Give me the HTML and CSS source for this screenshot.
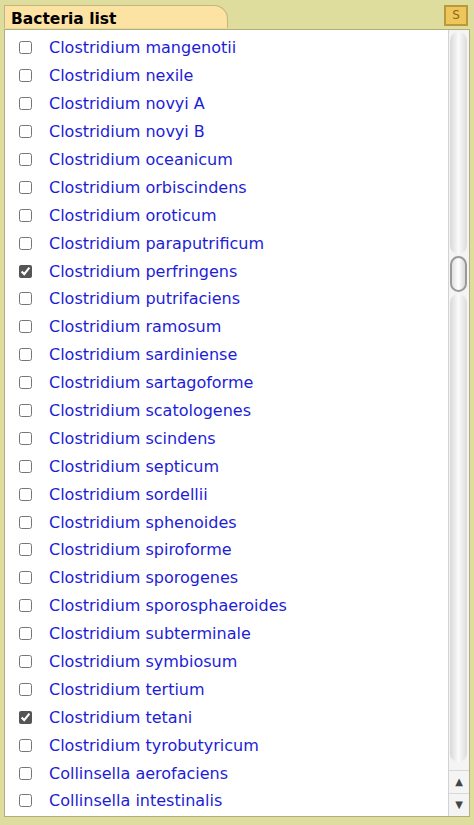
FILE: index.html
```html
<!DOCTYPE html>
<html lang="en">
<head>
    <meta charset="UTF-8">
    <meta name="viewport" content="width=device-width, initial-scale=1.0">
    <title>Bacteria list</title>
    <link rel="stylesheet" href="styles.css">
</head>
<body>

<div class="marco">
    <div class="cabecera">
        <div class="pestana">Bacteria list</div>
        <div class="boton-s">S</div>
    </div>

    <div class="caja">
        <ul class="lista">
            <li><input type="checkbox"><a href="#">Clostridium mangenotii</a></li>
            <li><input type="checkbox"><a href="#">Clostridium nexile</a></li>
            <li><input type="checkbox"><a href="#">Clostridium novyi A</a></li>
            <li><input type="checkbox"><a href="#">Clostridium novyi B</a></li>
            <li><input type="checkbox"><a href="#">Clostridium oceanicum</a></li>
            <li><input type="checkbox"><a href="#">Clostridium orbiscindens</a></li>
            <li><input type="checkbox"><a href="#">Clostridium oroticum</a></li>
            <li><input type="checkbox"><a href="#">Clostridium paraputrificum</a></li>
            <li><input type="checkbox" checked><a href="#">Clostridium perfringens</a></li>
            <li><input type="checkbox"><a href="#">Clostridium putrifaciens</a></li>
            <li><input type="checkbox"><a href="#">Clostridium ramosum</a></li>
            <li><input type="checkbox"><a href="#">Clostridium sardiniense</a></li>
            <li><input type="checkbox"><a href="#">Clostridium sartagoforme</a></li>
            <li><input type="checkbox"><a href="#">Clostridium scatologenes</a></li>
            <li><input type="checkbox"><a href="#">Clostridium scindens</a></li>
            <li><input type="checkbox"><a href="#">Clostridium septicum</a></li>
            <li><input type="checkbox"><a href="#">Clostridium sordellii</a></li>
            <li><input type="checkbox"><a href="#">Clostridium sphenoides</a></li>
            <li><input type="checkbox"><a href="#">Clostridium spiroforme</a></li>
            <li><input type="checkbox"><a href="#">Clostridium sporogenes</a></li>
            <li><input type="checkbox"><a href="#">Clostridium sporosphaeroides</a></li>
            <li><input type="checkbox"><a href="#">Clostridium subterminale</a></li>
            <li><input type="checkbox"><a href="#">Clostridium symbiosum</a></li>
            <li><input type="checkbox"><a href="#">Clostridium tertium</a></li>
            <li><input type="checkbox" checked><a href="#">Clostridium tetani</a></li>
            <li><input type="checkbox"><a href="#">Clostridium tyrobutyricum</a></li>
            <li><input type="checkbox"><a href="#">Collinsella aerofaciens</a></li>
            <li><input type="checkbox"><a href="#">Collinsella intestinalis</a></li>
        </ul>

        <div class="barra">
            <div class="pista">
                <div class="relleno-arriba"></div>
                <div class="pulgar"></div>
                <div class="relleno-abajo"></div>
            </div>
            <div class="flecha">&#9650;</div>
            <div class="flecha">&#9660;</div>
        </div>
    </div>
</div>

</body>
</html>
```

FILE: styles.css
```css
body {
    margin: 0;
    background-color: #dedd9d;
    font-family: "DejaVu Sans", Verdana, sans-serif;
}
.marco {
    width: 474px;
    height: 825px;
    padding: 5px 4px 0 4px;
    box-sizing: border-box;
}
.cabecera {
    display: flex;
    justify-content: space-between;
    align-items: flex-start;
    height: 24px;
}
.pestana {
    width: 224px;
    height: 23px;
    box-sizing: border-box;
    padding: 4px 0 0 6px;
    background-color: #fde3a3;
    border: 1px solid #c2b67a;
    border-bottom: none;
    border-top-right-radius: 14px;
    font-size: 15.5px;
    font-weight: bold;
    line-height: 19px;
    color: #000;
}
.boton-s {
    width: 24px;
    height: 21px;
    box-sizing: border-box;
    margin-right: 2px;
    background-color: #efc65c;
    border: 2px solid #b89a3c;
    color: #8a6a10;
    font-size: 12px;
    text-align: center;
    line-height: 17px;
}
.caja {
    display: flex;
    height: 786px;
    background-color: white;
    border: 1px solid #b3ad7c;
    overflow: hidden;
}
.lista {
    flex: 1;
    list-style: none;
    margin: 4px 0 0 0;
    padding: 0;
}
.lista li {
    display: flex;
    align-items: center;
    height: 27.9px;
    white-space: nowrap;
}
.lista input {
    width: 13px;
    height: 13px;
    margin: 0 17px 0 14px;
    accent-color: #555;
}
.lista a {
    color: #1d1dd6;
    text-decoration: none;
    font-size: 16px;
}
.barra {
    width: 20px;
    display: flex;
    flex-direction: column;
    border-left: 1px solid #d2d2d2;
    background-color: #f4f4f4;
}
.pista {
    flex: 1;
    display: flex;
    flex-direction: column;
    padding: 2px 2px 0 1px;
}
.relleno-arriba,
.relleno-abajo {
    background: linear-gradient(to right, #d8d8d8, #fafafa 50%, #dcdcdc);
}
.relleno-arriba {
    height: 222px;
    border-radius: 9px;
}
.relleno-abajo {
    flex: 1;
    border-radius: 9px;
    margin-bottom: 8px;
}
.pulgar {
    height: 36px;
    margin: 2px 0;
    border: 2px solid #9a9a9a;
    border-radius: 9px;
    background: linear-gradient(to right, #e0e0e0, #ffffff 50%, #d8d8d8);
    box-sizing: border-box;
}
.flecha {
    height: 22px;
    font-size: 10px;
    color: #444;
    text-align: center;
    line-height: 22px;
    border-top: 1px solid #d8d8d8;
}
```
